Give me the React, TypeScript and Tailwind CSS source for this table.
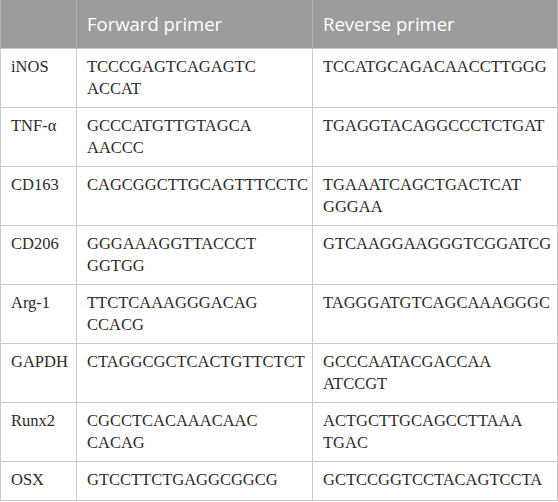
import React from 'react';

type Row = { gene: string; fwd: string[]; rev: string[] };

const rows: Row[] = [
  { gene: 'iNOS', fwd: ['TCCCGAGTCAGAGTC', 'ACCAT'], rev: ['TCCATGCAGACAACCTTGGG'] },
  { gene: 'TNF-α', fwd: ['GCCCATGTTGTAGCA', 'AACCC'], rev: ['TGAGGTACAGGCCCTCTGAT'] },
  { gene: 'CD163', fwd: ['CAGCGGCTTGCAGTTTCCTC'], rev: ['TGAAATCAGCTGACTCAT', 'GGGAA'] },
  { gene: 'CD206', fwd: ['GGGAAAGGTTACCCT', 'GGTGG'], rev: ['GTCAAGGAAGGGTCGGATCG'] },
  { gene: 'Arg-1', fwd: ['TTCTCAAAGGGACAG', 'CCACG'], rev: ['TAGGGATGTCAGCAAAGGGC'] },
  { gene: 'GAPDH', fwd: ['CTAGGCGCTCACTGTTCTCT'], rev: ['GCCCAATACGACCAA', 'ATCCGT'] },
  { gene: 'Runx2', fwd: ['CGCCTCACAAACAAC', 'CACAG'], rev: ['ACTGCTTGCAGCCTTAAA', 'TGAC'] },
  { gene: 'OSX', fwd: ['GTCCTTCTGAGGCGGCG'], rev: ['GCTCCGGTCCTACAGTCCTA'] },
];

const Lines = ({ lines }: { lines: string[] }) => (
  <>
    {lines.map((l, i) => (
      <div key={i}>{l}</div>
    ))}
  </>
);

const App: React.FC = () => {
  return (
    <div className="w-[558px] bg-white">
      <table className="w-full table-fixed border-collapse">
        <colgroup>
          <col className="w-[76px]" />
          <col className="w-[236px]" />
          <col />
        </colgroup>
        <thead>
          <tr className="bg-[#9c9c9c] text-white font-['Open_Sans',sans-serif] text-[18.5px] leading-[24px]">
            <th className="h-[48px] px-[10px] text-left font-normal border-x border-[#b4b4b4]"></th>
            <th className="h-[48px] px-[10px] text-left font-normal border-x border-[#b4b4b4]">Forward primer</th>
            <th className="h-[48px] px-[10px] text-left font-normal border-x border-[#b4b4b4]">Reverse primer</th>
          </tr>
        </thead>
        <tbody className="font-['Liberation_Serif',serif] text-[16.5px] leading-[22px] text-[#2b2b2b]">
          {rows.map((r, idx) => {
            const cell =
              'align-top px-[10px] pt-[7px] border border-[#cacaca] whitespace-nowrap ' +
              (idx === rows.length - 1 ? 'pb-[9px]' : 'pb-[7px]');
            return (
              <tr key={r.gene}>
                <td className={cell}>{r.gene}</td>
                <td className={cell}>
                  <Lines lines={r.fwd} />
                  {r.fwd.length === 1 && r.rev.length === 2 ? <div>&nbsp;</div> : null}
                </td>
                <td className={cell}>
                  <Lines lines={r.rev} />
                </td>
              </tr>
            );
          })}
        </tbody>
      </table>
    </div>
  );
};

export default App;
